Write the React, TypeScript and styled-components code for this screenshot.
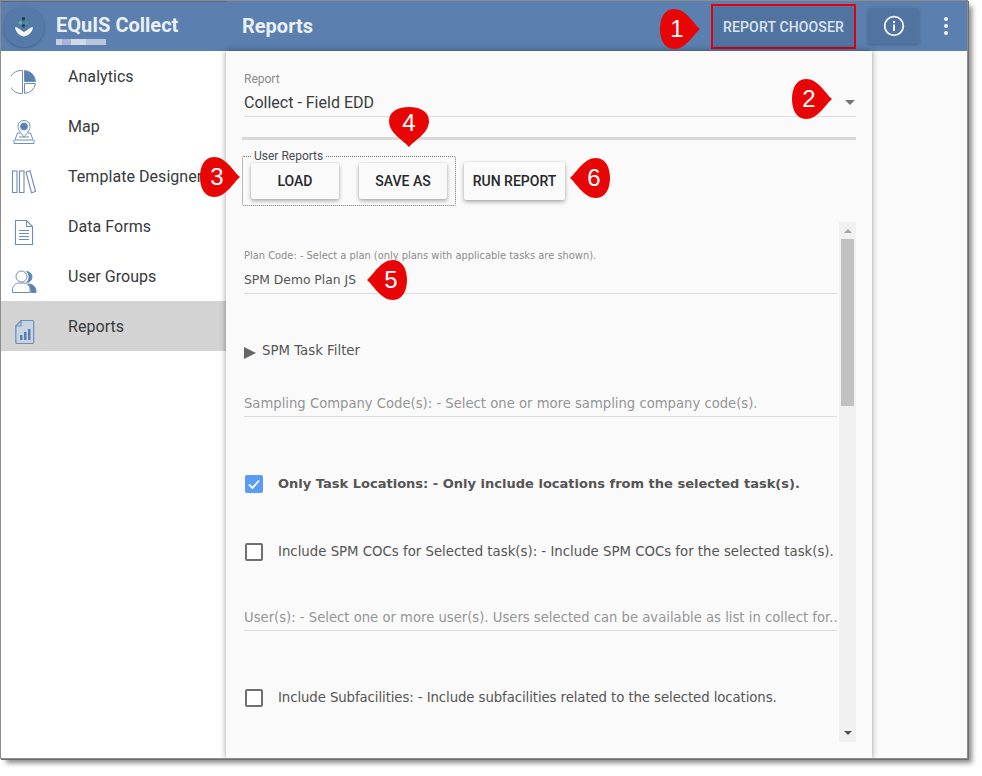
import React from "react";
import styled, { createGlobalStyle } from "styled-components";

const BLUE = "#5b7fae";
const LINE = "#6d8db6";

const GlobalStyle = createGlobalStyle`
  html, body {
    margin: 0;
    padding: 0;
    background: #fff;
    font-family: Roboto, "Liberation Sans", sans-serif;
  }
  * { box-sizing: border-box; }
`;

const Page = styled.div`
  position: relative;
  width: 982px;
  height: 776px;
  padding: 1px 0 0 1px;
  overflow: hidden;
`;

const Window = styled.div`
  width: 966px;
  height: 757px;
  display: flex;
  flex-direction: column;
  background: #fafafa;
  box-shadow: 0 0 0 1px #8c8c8c, 1px 1px 0 1px #6f6f6f, 5px 5px 5px 0 #8a8a8a;
  overflow: hidden;
`;

const Header = styled.header`
  height: 50px;
  flex: none;
  display: flex;
  align-items: center;
  background: ${BLUE};
  color: #eaf0f6;
`;

const Brand = styled.div`
  width: 225px;
  flex: none;
  align-self: stretch;
  display: flex;
  align-items: center;
  gap: 11px;
  padding-left: 3px;
  border-top: 1px solid #4f6a8d;
`;

const LogoCircle = styled.div`
  width: 40px;
  height: 40px;
  border-radius: 50%;
  background: #557aa9;
  box-shadow: 0 1px 3px rgba(40, 60, 90, 0.45);
  display: flex;
  align-items: center;
  justify-content: center;
`;

const BrandText = styled.div`
  display: flex;
  flex-direction: column;
  gap: 2px;
  margin-top: 5px;
  margin-left: 1px;
`;

const BrandName = styled.div`
  font-size: 20px;
  line-height: 24px;
  font-weight: 700;
`;

const BlurredLine = styled.div`
  width: 50px;
  height: 6px;
  background: linear-gradient(90deg, #c6cfe2 0 12%, #a9b4d6 12% 30%, #cfd8e6 30% 60%, #b9c5dc 60% 100%);
`;

const PageTitle = styled.div`
  font-size: 20px;
  font-weight: 700;
  margin-left: 16px;
  flex: 1;
`;

const ChooserFrame = styled.div`
  border: 2px solid #e4000f;
  padding: 1px;
  margin-right: 12px;
  margin-top: 1px;
`;

const HeaderButton = styled.button<{ $w: number; $h: number }>`
  width: ${(p) => p.$w}px;
  height: ${(p) => p.$h}px;
  padding: 0;
  border: 0;
  border-radius: 2px;
  background: #50739f;
  color: #dce5ef;
  font: 500 14px Roboto, sans-serif;
  letter-spacing: 0.15px;
  box-shadow: 0 1px 3px rgba(30, 50, 80, 0.35);
  display: flex;
  align-items: center;
  justify-content: center;
`;

const KebabWrap = styled.div`
  width: 48px;
  padding-left: 6px;
  flex: none;
  display: flex;
  flex-direction: column;
  align-items: center;
  gap: 3px;
`;

const KebabDot = styled.span`
  width: 4px;
  height: 4px;
  border-radius: 50%;
  background: #f2f5f9;
`;

const Body = styled.div`
  flex: 1;
  min-height: 0;
  display: flex;
`;

const Sidebar = styled.nav`
  width: 225px;
  flex: none;
  background: #fff;
`;

const NavItem = styled.div<{ $active?: boolean }>`
  height: 50px;
  display: flex;
  align-items: center;
  background: ${(p) => (p.$active ? "#d3d3d3" : "transparent")};
  color: #37393d;
  font-size: 16px;
  letter-spacing: 0.05px;
  white-space: nowrap;
`;

const NavIcon = styled.div`
  width: 67px;
  flex: none;
  padding-left: 10px;
  display: flex;
  margin-top: 12px;
`;

const Main = styled.main`
  width: 646px;
  flex: none;
  padding: 0 16px;
  background: #fafafa;
  box-shadow: 0 0 6px rgba(0, 0, 0, 0.4);
  display: flex;
  flex-direction: column;
  overflow: hidden;
`;

const ReportSelect = styled.div`
  margin: 21px 0 0 2px;
  height: 45px;
  border-bottom: 1px solid #dcdcdc;
  position: relative;
`;

const ReportLabel = styled.div`
  font-size: 12px;
  line-height: 14px;
  color: #8a8a8a;
`;

const ReportValue = styled.div`
  font-size: 16px;
  line-height: 20px;
  margin-top: 7px;
  color: #3a3c40;
`;

const SelectCaret = styled.span`
  position: absolute;
  right: 1px;
  top: 28px;
  border-left: 5px solid transparent;
  border-right: 5px solid transparent;
  border-top: 5px solid #757575;
`;

const Divider = styled.div`
  height: 3px;
  margin-top: 20px;
  background: #d9d9d9;
`;

const ActionRow = styled.div`
  display: flex;
  align-items: flex-start;
  gap: 8px;
  margin-top: 11px;
`;

const UserReports = styled.fieldset`
  width: 214px;
  height: 56px;
  margin: 0;
  padding: 0 8px;
  border: 1px dotted #777;
  border-radius: 2px;
  display: flex;
  gap: 20px;
  margin-top: -1px;
`;

const Legend = styled.legend`
  font-size: 12px;
  line-height: 13px;
  padding: 0 3px;
  color: #4a4a55;
`;

const ActionButton = styled.button<{ $w: number; $h: number }>`
  width: ${(p) => p.$w}px;
  height: ${(p) => p.$h}px;
  padding: 0;
  border: 0;
  border-radius: 2px;
  background: #fafafa;
  color: #26282c;
  font: 500 14px Roboto, sans-serif;
  box-shadow: 0 2px 4px rgba(0, 0, 0, 0.32), 0 0 2px rgba(0, 0, 0, 0.12);
`;

const RunButton = styled(ActionButton)`
  margin-top: 11px;
`;

const FormArea = styled.div`
  margin-top: 16px;
  height: 520px;
  display: flex;
`;

const FormColumn = styled.div`
  width: 597px;
  flex: none;
  padding: 0 2px;
  font-family: "DejaVu Sans", sans-serif;
  color: #555;
`;

const Field = styled.div<{ $h: number; $gap: number }>`
  height: ${(p) => p.$h}px;
  border-bottom: 1px solid #dcdcdc;
  display: flex;
  flex-direction: column;
  justify-content: flex-end;
  padding-bottom: ${(p) => p.$gap}px;
`;

const TinyLabel = styled.div`
  font-size: 9.9px;
  line-height: 12px;
  color: #8c8c8c;
  margin-bottom: 10px;
  white-space: nowrap;
`;

const FieldValue = styled.div`
  font-size: 12.33px;
  line-height: 16px;
  color: #555;
`;

const Placeholder = styled.div`
  font-size: 13.2px;
  line-height: 16px;
  color: #959595;
  white-space: nowrap;
`;

const FilterRow = styled.div`
  height: 40px;
  margin-top: 36px;
  display: flex;
  align-items: center;
  gap: 6px;
  font-size: 13.3px;
`;

const FilterArrow = styled.span`
  width: 0;
  height: 0;
  margin-top: 6px;
  border-top: 6px solid transparent;
  border-bottom: 6px solid transparent;
  border-left: 12px solid #666;
`;

const CheckRow = styled.div<{ $top?: number }>`
  height: 68px;
  margin-top: ${(p) => p.$top ?? 0}px;
  display: flex;
  align-items: center;
  gap: 15px;
  padding-left: 1px;
`;

const CheckBox = styled.span<{ $checked?: boolean }>`
  width: 18px;
  height: 18px;
  flex: none;
  border-radius: 2px;
  border: 2px solid ${(p) => (p.$checked ? "#5a9bf6" : "#6f6f6f")};
  background: ${(p) => (p.$checked ? "#5a9bf6" : "#fff")};
  display: flex;
  align-items: center;
  justify-content: center;
`;

const CheckText = styled.span<{ $bold?: boolean; $tight?: boolean }>`
  font-size: ${(p) => (p.$bold ? 13.03 : 13.3)}px;
  font-weight: ${(p) => (p.$bold ? 700 : 400)};
  letter-spacing: ${(p) => (p.$tight ? -0.09 : 0)}px;
  white-space: nowrap;
  margin-top: -1px;
`;

const ScrollTrack = styled.div`
  width: 17px;
  flex: none;
  height: 520px;
  background: #f1f1f1;
  display: flex;
  flex-direction: column;
  align-items: center;
`;

const ArrowUp = styled.span`
  margin-top: 7px;
  border-left: 4px solid transparent;
  border-right: 4px solid transparent;
  border-bottom: 4px solid #a3a3a3;
`;

const ScrollThumb = styled.div`
  width: 13px;
  height: 167px;
  margin-top: 6px;
  background: #c1c1c1;
`;

const ArrowDown = styled.span`
  margin-top: auto;
  margin-bottom: 7px;
  border-left: 4px solid transparent;
  border-right: 4px solid transparent;
  border-top: 4px solid #505050;
`;

const CalloutWrap = styled.div<{ $x: number; $y: number }>`
  position: absolute;
  left: ${(p) => p.$x}px;
  top: ${(p) => p.$y}px;
  width: 40px;
  height: 40px;
`;

const CalloutNumber = styled.span<{ $dx: number; $dy: number }>`
  position: absolute;
  left: ${(p) => p.$dx}px;
  top: ${(p) => p.$dy}px;
  width: 20px;
  margin-left: -10px;
  margin-top: -14px;
  height: 28px;
  text-align: center;
  color: #fff;
  font: 24px/28px "Liberation Sans", Arial, sans-serif;
`;

type Dir = "right" | "left" | "down";

const rotation: Record<Dir, number> = { right: 0, left: 180, down: 90 };
const digitPos: Record<Dir, [number, number]> = {
  right: [17, 20],
  left: [24, 20],
  down: [20, 16],
};

const Callout = ({ n, x, y, dir }: { n: number; x: number; y: number; dir: Dir }) => (
  <CalloutWrap $x={x} $y={y}>
    <svg width="40" height="40" viewBox="0 0 40 40">
      <path
        transform={`rotate(${rotation[dir]} 20 20)`}
        d="M40 20C33 14 26 0 14 0 4 0 0 10 0 20s4 20 14 20c12 0 19-14 26-20Z"
        fill="#e80505"
      />
    </svg>
    <CalloutNumber $dx={digitPos[dir][0]} $dy={digitPos[dir][1]}>
      {n}
    </CalloutNumber>
  </CalloutWrap>
);

const Logo = () => (
  <svg width="20" height="20" viewBox="0 0 20 20">
    <circle cx="9.500" cy="1.800" r="1.700" fill="#22384f" />
    <circle cx="6.300" cy="5.800" r="1.700" fill="#55c27a" />
    <circle cx="12.700" cy="5.800" r="1.700" fill="#3f9f8a" />
    <circle cx="9.500" cy="8.800" r="1.600" fill="#22384f" />
    <path d="M1 10c3 .5 5 2 6.500 3.500l2.500 1.500 2.500-1.500C14 12 16 10.500 19 10c-.5 4.500-3.500 8.500-9 9.500-5.500-1-8.500-5-9-9.500Z" fill="#f2f5f3" />
  </svg>
);

const AnalyticsIcon = () => (
  <svg width="26" height="26" viewBox="0 0 26 26" fill="none" stroke={LINE} strokeWidth="1">
    <path d="M11.500 1.600A11.500 11.500 0 1 0 11.500 24.400Z" />
    <path d="M13.500 1.500A11.500 11.500 0 0 1 24.500 12.500H13.500Z" fill={BLUE} />
    <path d="M13.500 14.500h11A11.500 11.500 0 0 1 13.500 24.400Z" />
  </svg>
);

const MapIcon = () => (
  <svg width="26" height="26" viewBox="0 0 26 26" fill="none" stroke={LINE} strokeWidth="1">
    <path d="M13 18C9 13 7 10.500 7 7.500a6 6 0 0 1 12 0C19 10.500 17 13 13 18Z" />
    <circle cx="13" cy="7.500" r="3.500" fill={BLUE} />
    <path d="M9 14H6.500L4 21h18l-2.500-7H17" />
    <path d="M3 21v3.500h20V21M8 18h10" />
  </svg>
);

const LibraryIcon = () => (
  <svg width="26" height="26" viewBox="0 0 26 26" fill="none" stroke={LINE} strokeWidth="1.100">
    <rect x="1.500" y="2" width="4.500" height="21.500" />
    <rect x="8.500" y="2" width="4.500" height="21.500" />
    <path d="M15 3l4-1.200L24.500 22.500l-4 1.200Z" />
  </svg>
);

const DocIcon = () => (
  <svg width="26" height="26" viewBox="0 0 26 26" fill="none" stroke={LINE} strokeWidth="1.100">
    <path d="M4.500 1.500h11l6 6v18h-17Z" />
    <path d="M15.500 1.500v6h6M8 11.500h10M8 14.500h10M8 17.500h10M8 20.500h10" />
  </svg>
);

const UsersIcon = () => (
  <svg width="26" height="26" viewBox="0 0 26 26" fill="none" stroke={LINE} strokeWidth="1">
    <path d="M15.500 2.500a5.500 5.500 0 0 1 0 11 7 7 0 0 0 0-11Z" fill={BLUE} />
    <path d="M19 15c3.500.8 6 3.500 6 7v1.500h-5c0-3.500-.5-6.500-3-8.500Z" fill={BLUE} />
    <circle cx="10.500" cy="7.500" r="5.500" />
    <path d="M1.500 23.500V21c0-4 3-6.500 6-7h5.500c4 .5 6 3.500 6 7v2.500Z" />
  </svg>
);

const ReportsIcon = () => (
  <svg width="26" height="26" viewBox="0 0 26 26" fill="none" stroke={LINE} strokeWidth="1.200">
    <path d="M10 1.500h11.500a1.200 1.200 0 0 1 1.200 1.200v20.600a1.200 1.200 0 0 1-1.200 1.200H6a1.200 1.200 0 0 1-1.200-1.200V7Z" fill="#c9d4e2" />
    <path d="M10 1.500V7H4.800" />
    <path d="M9 21v-5h2.500v5ZM13 21v-8h2.500v8ZM17 21V10h2.500v11Z" fill={BLUE} stroke="none" />
  </svg>
);

const InfoIcon = () => (
  <svg width="22" height="22" viewBox="0 0 22 22" fill="none">
    <circle cx="11" cy="11" r="9.300" stroke="#f2f5f9" strokeWidth="1.800" />
    <rect x="10" y="9.500" width="2" height="6.500" fill="#f2f5f9" />
    <rect x="10" y="6" width="2" height="2" fill="#f2f5f9" />
  </svg>
);

const navItems = [
  { label: "Analytics", icon: <AnalyticsIcon /> },
  { label: "Map", icon: <MapIcon /> },
  { label: "Template Designer", icon: <LibraryIcon /> },
  { label: "Data Forms", icon: <DocIcon /> },
  { label: "User Groups", icon: <UsersIcon /> },
  { label: "Reports", icon: <ReportsIcon />, active: true },
];

const App = () => (
  <Page>
    <GlobalStyle />
    <Window>
      <Header>
        <Brand>
          <LogoCircle>
            <Logo />
          </LogoCircle>
          <BrandText>
            <BrandName>EQuIS Collect</BrandName>
            <BlurredLine />
          </BrandText>
        </Brand>
        <PageTitle>Reports</PageTitle>
        <ChooserFrame>
          <HeaderButton $w={139} $h={39}>REPORT CHOOSER</HeaderButton>
        </ChooserFrame>
        <HeaderButton $w={51} $h={36}>
          <InfoIcon />
        </HeaderButton>
        <KebabWrap>
          <KebabDot />
          <KebabDot />
          <KebabDot />
        </KebabWrap>
      </Header>
      <Body>
        <Sidebar>
          {navItems.map((item) => (
            <NavItem key={item.label} $active={item.active}>
              <NavIcon>{item.icon}</NavIcon>
              {item.label}
            </NavItem>
          ))}
        </Sidebar>
        <Main>
          <ReportSelect>
            <ReportLabel>Report</ReportLabel>
            <ReportValue>Collect - Field EDD</ReportValue>
            <SelectCaret />
          </ReportSelect>
          <Divider />
          <ActionRow>
            <UserReports>
              <Legend>User Reports</Legend>
              <ActionButton $w={88} $h={36}>LOAD</ActionButton>
              <ActionButton $w={88} $h={36}>SAVE AS</ActionButton>
            </UserReports>
            <RunButton $w={101} $h={38}>RUN REPORT</RunButton>
          </ActionRow>
          <FormArea>
            <FormColumn>
              <Field $h={72} $gap={5}>
                <TinyLabel>Plan Code: - Select a plan (only plans with applicable tasks are shown).</TinyLabel>
                <FieldValue>SPM Demo Plan JS</FieldValue>
              </Field>
              <FilterRow>
                <FilterArrow />
                SPM Task Filter
              </FilterRow>
              <Field $h={47} $gap={4}>
                <Placeholder>Sampling Company Code(s): - Select one or more sampling company code(s).</Placeholder>
              </Field>
              <CheckRow $top={33}>
                <CheckBox $checked>
                  <svg width="14" height="14" viewBox="0 0 14 14" fill="none">
                    <path d="M2 7.500l3.500 3.500L12 3.500" stroke="#fff" strokeWidth="1.800" />
                  </svg>
                </CheckBox>
                <CheckText $bold>Only Task Locations: - Only include locations from the selected task(s).</CheckText>
              </CheckRow>
              <CheckRow>
                <CheckBox />
                <CheckText>Include SPM COCs for Selected task(s): - Include SPM COCs for the selected task(s).</CheckText>
              </CheckRow>
              <Field $h={45} $gap={4}>
                <Placeholder>User(s): - Select one or more user(s). Users selected can be available as list in collect for..</Placeholder>
              </Field>
              <CheckRow $top={33}>
                <CheckBox />
                <CheckText $tight>Include Subfacilities: - Include subfacilities related to the selected locations.</CheckText>
              </CheckRow>
            </FormColumn>
            <ScrollTrack>
              <ArrowUp />
              <ScrollThumb />
              <ArrowDown />
            </ScrollTrack>
          </FormArea>
        </Main>
      </Body>
    </Window>
    <Callout n={1} x={660} y={9} dir="right" />
    <Callout n={2} x={792} y={79} dir="right" />
    <Callout n={3} x={200} y={157} dir="right" />
    <Callout n={4} x={389} y={107} dir="down" />
    <Callout n={5} x={367} y={260} dir="left" />
    <Callout n={6} x={570} y={158} dir="left" />
  </Page>
);

export default App;
